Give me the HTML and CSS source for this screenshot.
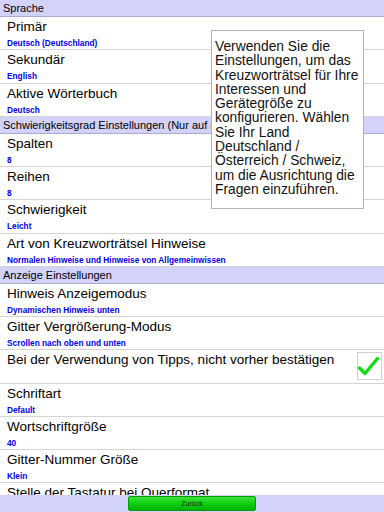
FILE: index.html
```html
<!DOCTYPE html>
<html lang="de">
<head>
<meta charset="utf-8">
<title>Einstellungen</title>
<link rel="stylesheet" href="styles.css">
</head>
<body>
<div class="screen">
  <div class="list">
    <div class="section">Sprache</div>
    <div class="row"><div class="title">Primär</div><div class="sub">Deutsch (Deutschland)</div></div>
    <div class="row"><div class="title">Sekundär</div><div class="sub">English</div></div>
    <div class="row"><div class="title">Aktive Wörterbuch</div><div class="sub">Deutsch</div></div>
    <div class="section">Schwierigkeitsgrad Einstellungen (Nur auf neue Spiele)</div>
    <div class="row"><div class="title">Spalten</div><div class="sub">8</div></div>
    <div class="row"><div class="title">Reihen</div><div class="sub">8</div></div>
    <div class="row"><div class="title">Schwierigkeit</div><div class="sub">Leicht</div></div>
    <div class="row"><div class="title">Art von Kreuzworträtsel Hinweise</div><div class="sub">Normalen Hinweise und Hinweise von Allgemeinwissen</div></div>
    <div class="section">Anzeige Einstellungen</div>
    <div class="row"><div class="title">Hinweis Anzeigemodus</div><div class="sub">Dynamischen Hinweis unten</div></div>
    <div class="row"><div class="title">Gitter Vergrößerung-Modus</div><div class="sub">Scrollen nach oben und unten</div></div>
    <div class="row row-check">
      <div class="title">Bei der Verwendung von Tipps, nicht vorher bestätigen</div>
      <span class="check"><svg width="25" height="28" viewBox="0 0 25 28"><polyline points="2.5,16 8,21.5 20.5,6.5" fill="none" stroke="#11dd11" stroke-width="3.4" stroke-linecap="round" stroke-linejoin="round"/></svg></span>
    </div>
    <div class="row"><div class="title">Schriftart</div><div class="sub">Default</div></div>
    <div class="row"><div class="title">Wortschriftgröße</div><div class="sub">40</div></div>
    <div class="row"><div class="title">Gitter-Nummer Größe</div><div class="sub">Klein</div></div>
    <div class="row"><div class="title">Stelle der Tastatur bei Querformat</div><div class="sub">Unten</div></div>
  </div>
  <div class="footer"><button class="back" type="button">Zurück</button></div>
  <div class="tooltip">
    <span class="line">Verwenden Sie die</span>
    <span class="line">Einstellungen, um das</span>
    <span class="line">Kreuzworträtsel für Ihre</span>
    <span class="line">Interessen und</span>
    <span class="line">Gerätegröße zu</span>
    <span class="line">konfigurieren. Wählen</span>
    <span class="line">Sie Ihr Land</span>
    <span class="line">Deutschland /</span>
    <span class="line">Österreich / Schweiz,</span>
    <span class="line">um die Ausrichtung die</span>
    <span class="line">Fragen einzuführen.</span>
  </div>
</div>
</body>
</html>
```
FILE: styles.css
```css
html, body {
  margin: 0;
  padding: 0;
  background: #ffffff;
}

.screen {
  position: relative;
  width: 384px;
  height: 512px;
  display: flex;
  flex-direction: column;
  overflow: hidden;
  background: #ffffff;
  font-family: "Liberation Sans", Arial, sans-serif;
  color: #000000;
}

.list {
  flex: 1;
  overflow: hidden;
}

.section {
  height: 16px;
  line-height: 16px;
  font-size: 11px;
  padding-left: 3px;
  background: #d2d2fa;
  border-bottom: 1px solid #aaaad8;
  white-space: nowrap;
  color: #000000;
}

.row {
  height: 32.25px;
  padding-left: 7px;
  border-bottom: 1px solid #d4d4d4;
}

.row-check {
  display: flex;
  justify-content: space-between;
  align-items: flex-start;
}

.title {
  font-size: 13.5px;
  line-height: 16px;
  padding-top: 2px;
  white-space: nowrap;
  color: #000000;
}

.sub {
  font-size: 8.3px;
  font-weight: bold;
  line-height: 10px;
  margin-top: 3px;
  color: #0000e6;
  white-space: nowrap;
}

.check {
  width: 25px;
  height: 28px;
  margin-top: 2px;
  margin-right: 2px;
  border: 1px solid #cfcfcf;
  box-sizing: border-box;
  background: #ffffff;
  display: block;
}

.check svg {
  display: block;
  margin: -1px;
}

.footer {
  height: 17px;
  flex: none;
  background: #d2d2fa;
  display: flex;
  justify-content: center;
  align-items: flex-start;
  padding-top: 1px;
  box-sizing: border-box;
}

.back {
  width: 128px;
  height: 15px;
  margin: 0;
  padding: 0;
  border: 1px solid #079a07;
  border-radius: 2px;
  background: linear-gradient(#3be23b, #0fcf0f 50%, #03b403);
  font-family: "Liberation Sans", Arial, sans-serif;
  font-size: 7px;
  line-height: 13px;
  color: #103010;
}

.tooltip {
  position: absolute;
  left: 211px;
  top: 30px;
  width: 153px;
  height: 179px;
  box-sizing: border-box;
  border: 1px solid #b4b4b4;
  background: #ffffff;
  padding: 9px 3px 0 3px;
  font-size: 13.8px;
  line-height: 14.3px;
  color: #111111;
}

.line {
  display: block;
  white-space: nowrap;
}
```
